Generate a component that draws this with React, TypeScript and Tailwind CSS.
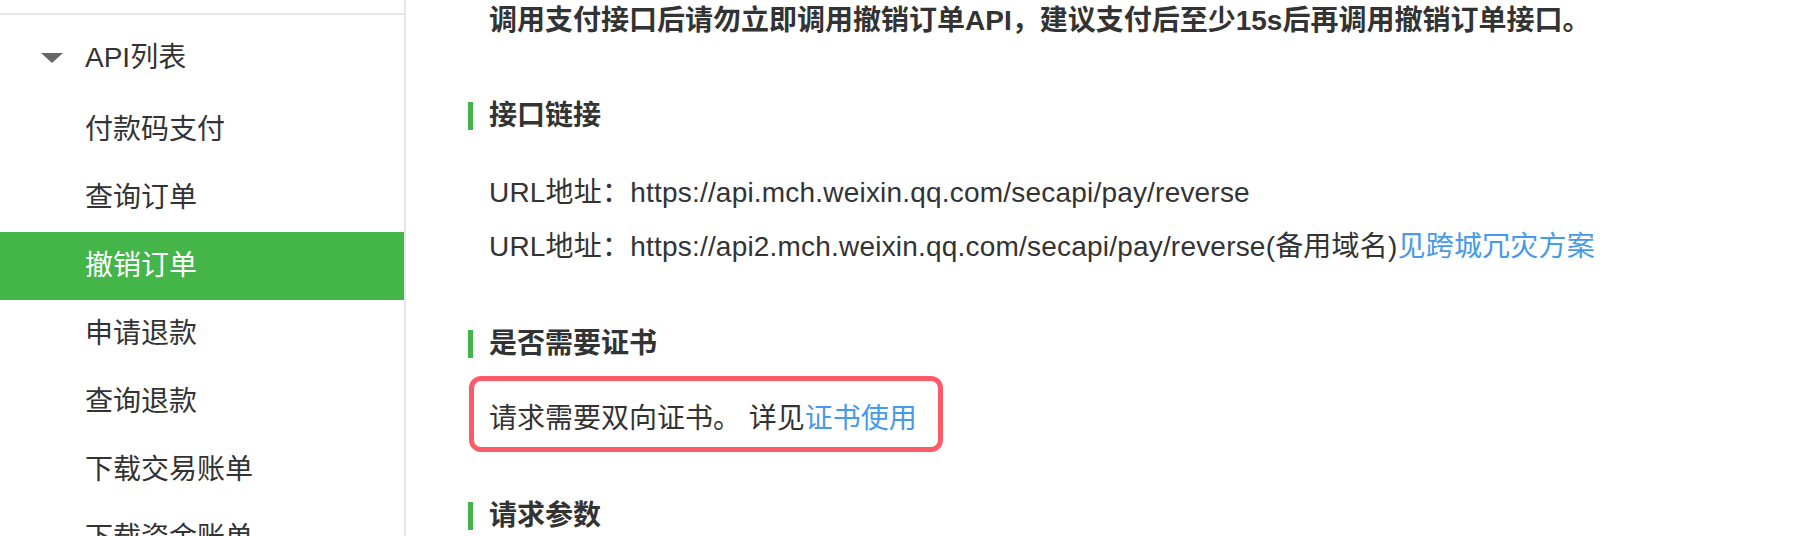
import React from "react";

const items = ["付款码支付", "查询订单", "撤销订单", "申请退款", "查询退款", "下载交易账单", "下载资金账单"];

function Heading({ children, className = "" }: { children: React.ReactNode; className?: string }) {
  return (
    <h3 className={`border-l-[5px] border-[#44b549] pl-[16px] text-[28px] font-bold leading-[28px] text-[#333333] ${className}`}>
      {children}
    </h3>
  );
}

export default function App() {
  return (
    <div className="flex h-[536px] w-[1810px] overflow-hidden bg-white font-['Liberation_Sans','Noto_Sans_CJK_SC',sans-serif] text-[#333333]">
      <aside className="w-[406px] shrink-0 border-r-2 border-[#e6e6ea] pt-[13px]">
        <div className="border-t-2 border-[#e6e6ea]">
          <div className="flex h-[81px] items-center pl-[41px] pt-[5px]">
            <svg width="22" height="10" viewBox="0 0 22 10" className="shrink-0">
              <polygon points="0,0 22,0 11,10" fill="#666666" />
            </svg>
            <span className="ml-[22px] text-[28px] leading-[40px]">API列表</span>
          </div>
          {items.map((it) => (
            <div
              key={it}
              className={`flex h-[68px] items-center pl-[85px] text-[28px] leading-[40px] ${
                it === "撤销订单" ? "bg-[#44b549] text-white" : "text-[#333333]"
              }`}
            >
              {it}
            </div>
          ))}
        </div>
      </aside>
      <main className="flex-1 pl-[62px]">
        <p className="pl-[21px] text-[28px] font-bold leading-[42px]">
          调用支付接口后请勿立即调用撤销订单API，建议支付后至少15s后再调用撤销订单接口。
        </p>
        <Heading className="mt-[60px]">接口链接</Heading>
        <div className="mt-[36px] pl-[21px] text-[28px] leading-[54px] tracking-[0.2px]">
          <p>URL地址：https://api.mch.weixin.qq.com/secapi/pay/reverse</p>
          <p>
            URL地址：https://api2.mch.weixin.qq.com/secapi/pay/reverse(备用域名)
            <a className="text-[#459ae9]">见跨城冗灾方案</a>
          </p>
        </div>
        <Heading className="mt-[56px]">是否需要证书</Heading>
        <div className="ml-[1px] mt-[18px] inline-block rounded-[12px] border-[5px] border-[#ff5a68] pb-[8px] pl-[15px] pr-[21px] pt-[18px] text-[28px] leading-[40px]">
          请求需要双向证书。 详见<a className="text-[#459ae9]">证书使用</a>
        </div>
        <Heading className="mt-[50px]">请求参数</Heading>
      </main>
    </div>
  );
}
